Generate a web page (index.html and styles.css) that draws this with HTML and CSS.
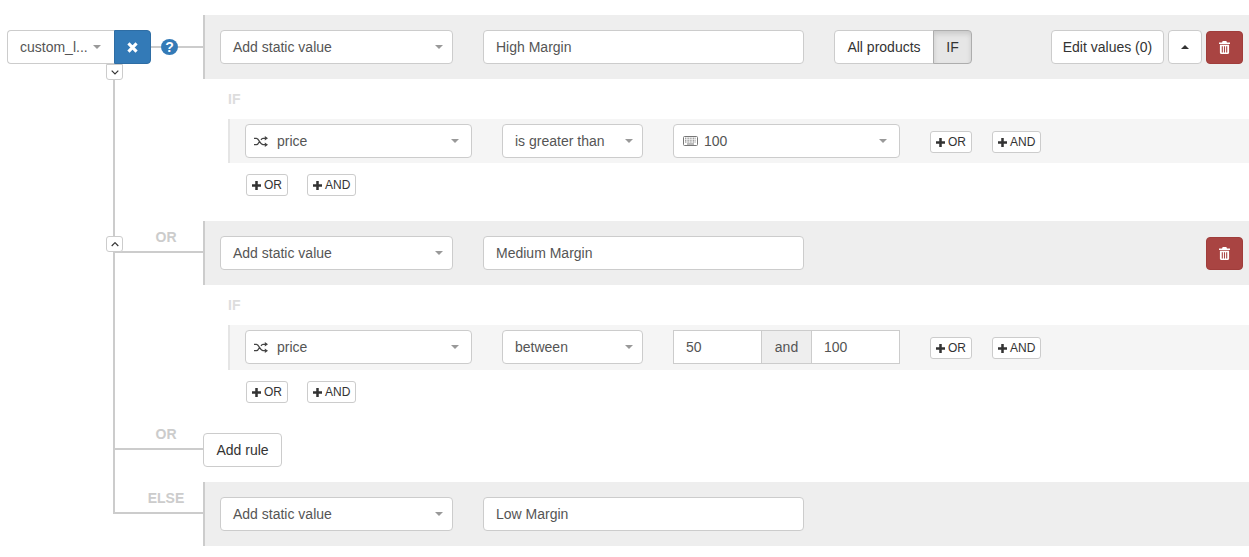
FILE: index.html
```html
<!DOCTYPE html>
<html lang="en">
<head>
<meta charset="utf-8">
<title>Rule builder</title>
<link rel="stylesheet" href="styles.css">
</head>
<body>
<svg class="defs" width="0" height="0" aria-hidden="true">
  <symbol id="plus" viewBox="0 0 10 10"><path d="M3.6 0h2.8v3.6H10v2.8H6.4V10H3.6V6.4H0V3.6h3.6z"/></symbol>
  <symbol id="trash" viewBox="0 0 12 14"><path d="M4 0h4l.7 1.5H12v1.6H0V1.500h3.300zM1 4h10v8.700c0 .8-.5 1.300-1.300 1.300H2.300C1.500 14 1 13.500 1 12.700zm2 1.500v7h1.200v-7zm2.400 0v7h1.200v-7zm2.400 0v7H9v-7z" fill-rule="evenodd"/></symbol>
  <symbol id="shuffle" viewBox="0 0 14 11"><path d="M0 2.300h2.500c2.500 0 3.500 6.400 6.500 6.400h2M0 8.700h2.500c1.400 0 2.200-1.800 2.800-3M7 3.800c.5-.8 1.100-1.500 2-1.500h2" fill="none" stroke="currentColor" stroke-width="1.300"/><path d="M10.800 0 14 2.300l-3.200 2.300zM10.800 6.400 14 8.700l-3.200 2.300z"/></symbol>
  <symbol id="keyboard" viewBox="0 0 15 10"><rect x=".5" y=".5" width="14" height="9" rx="1" fill="none" stroke="currentColor"/><path d="M2 2.200h11M2 4.200h11M2 6h11" stroke="currentColor" stroke-dasharray="1 .6" fill="none"/><path d="M4 8h7" stroke="currentColor" fill="none"/></symbol>
</svg>

<main class="builder">
  <section class="tier">
    <div class="gutter gutter-top">
      <span class="trunk trunk-first"></span>
      <div class="combo">
        <button class="select select-combo"><span class="select-text">custom_l...</span><i class="caret"></i></button>
        <button class="btn-clear"><svg width="11" height="11" viewBox="0 0 10 10"><path d="M1.300 1.300l7.400 7.400M8.700 1.300l-7.400 7.400" stroke="#fff" stroke-width="2.800" fill="none"/></svg></button>
      </div>
      <span class="stub stub-short"></span>
      <span class="help">?</span>
      <span class="stub stub-long"></span>
      <button class="toggle toggle-first"><svg width="8" height="5" viewBox="0 0 8 5"><path d="M.7.700 4 4l3.300-3.300" fill="none" stroke="#333" stroke-width="1.200"/></svg></button>
    </div>
    <div class="content content-first">
      <div class="head">
        <button class="select select-value"><span class="select-text">Add static value</span><i class="caret"></i></button>
        <input class="name" value="High Margin" readonly>
        <div class="segment">
          <button class="seg">All products</button>
          <button class="seg seg-on">IF</button>
        </div>
        <div class="head-actions">
          <button class="btn btn-edit">Edit values (0)</button>
          <button class="btn btn-up"><i class="caret caret-up"></i></button>
          <button class="btn-del"><svg class="trash-icon"><use href="#trash"/></svg></button>
        </div>
      </div>
      <div class="if-label">IF</div>
      <div class="cond">
        <button class="select select-field"><svg class="ico-shuffle"><use href="#shuffle"/></svg><span class="select-text">price</span><i class="caret"></i></button>
        <button class="select select-op"><span class="select-text">is greater than</span><i class="caret"></i></button>
        <button class="select select-field"><svg class="ico-kbd"><use href="#keyboard"/></svg><span class="select-text">100</span><i class="caret"></i></button>
        <div class="adders adders-inline">
          <button class="xs"><svg class="ico-plus"><use href="#plus"/></svg>OR</button>
          <button class="xs"><svg class="ico-plus"><use href="#plus"/></svg>AND</button>
        </div>
      </div>
      <div class="adders adders-below">
        <button class="xs"><svg class="ico-plus"><use href="#plus"/></svg>OR</button>
        <button class="xs"><svg class="ico-plus"><use href="#plus"/></svg>AND</button>
      </div>
    </div>
  </section>

  <section class="tier">
    <div class="gutter gutter-or">
      <span class="trunk"></span>
      <span class="branch branch-or"></span>
      <button class="toggle toggle-second"><svg width="8" height="5" viewBox="0 0 8 5"><path d="M.7 4 4 .7 7.300 4" fill="none" stroke="#333" stroke-width="1.200"/></svg></button>
      <div class="tag">OR</div>
    </div>
    <div class="content content-second">
      <div class="head">
        <button class="select select-value"><span class="select-text">Add static value</span><i class="caret"></i></button>
        <input class="name" value="Medium Margin" readonly>
        <div class="head-actions">
          <button class="btn-del"><svg class="trash-icon"><use href="#trash"/></svg></button>
        </div>
      </div>
      <div class="if-label">IF</div>
      <div class="cond cond-tall">
        <button class="select select-field"><svg class="ico-shuffle"><use href="#shuffle"/></svg><span class="select-text">price</span><i class="caret"></i></button>
        <button class="select select-op"><span class="select-text">between</span><i class="caret"></i></button>
        <div class="range">
          <input class="range-input range-min" value="50" readonly>
          <span class="range-and">and</span>
          <input class="range-input range-max" value="100" readonly>
        </div>
        <div class="adders adders-inline">
          <button class="xs"><svg class="ico-plus"><use href="#plus"/></svg>OR</button>
          <button class="xs"><svg class="ico-plus"><use href="#plus"/></svg>AND</button>
        </div>
      </div>
      <div class="adders adders-below">
        <button class="xs"><svg class="ico-plus"><use href="#plus"/></svg>OR</button>
        <button class="xs"><svg class="ico-plus"><use href="#plus"/></svg>AND</button>
      </div>
    </div>
  </section>

  <section class="tier">
    <div class="gutter gutter-add">
      <span class="trunk"></span>
      <span class="branch branch-add"></span>
      <div class="tag">OR</div>
    </div>
    <div class="content content-add">
      <button class="btn btn-add">Add rule</button>
    </div>
  </section>

  <section class="tier">
    <div class="gutter gutter-else">
      <span class="trunk trunk-last"></span>
      <span class="branch branch-else"></span>
      <div class="tag">ELSE</div>
    </div>
    <div class="content">
      <div class="head">
        <button class="select select-value"><span class="select-text">Add static value</span><i class="caret"></i></button>
        <input class="name" value="Low Margin" readonly>
      </div>
    </div>
  </section>
</main>
</body>
</html>
```

FILE: styles.css
```css
* { box-sizing: border-box; }

html, body {
  margin: 0;
  height: 100%;
  overflow: hidden;
  background: #fff;
}

body {
  font-family: "Liberation Sans", Arial, sans-serif;
  font-size: 14px;
  line-height: 20px;
  color: #333;
}

button, input {
  font: inherit;
  margin: 0;
}

.defs { position: absolute; }

.builder { padding-top: 15px; }

.tier { display: flex; }

.gutter {
  position: relative;
  flex: 0 0 203px;
}

.gutter-top {
  display: flex;
  align-items: center;
  align-self: stretch;
  height: 64px;
  padding-left: 7px;
}

.gutter-or { padding-top: 8px; }
.gutter-add { padding-top: 6px; }
.gutter-else { padding-top: 8px; }

.trunk {
  position: absolute;
  left: 113px;
  top: 0;
  bottom: 0;
  width: 2px;
  background: #ccc;
}

.trunk-first { top: 49px; bottom: -142px; }
.trunk-last { bottom: auto; height: 32px; }

.branch {
  position: absolute;
  left: 113px;
  width: 90px;
  height: 2px;
  background: #ccc;
}

.branch-or { top: 30px; }
.branch-add { top: 28px; }
.branch-else { top: 30px; }

.toggle {
  position: absolute;
  left: 106px;
  width: 17px;
  height: 16px;
  padding: 0;
  display: flex;
  align-items: center;
  justify-content: center;
  background: #fff;
  border: 1px solid #ccc;
  border-radius: 3px;
}

.toggle-first { top: 49px; border-top-left-radius: 0; border-top-right-radius: 0; }
.toggle-second { top: 15px; }

.tag {
  margin-left: 129px;
  width: 74px;
  height: 16px;
  line-height: 16px;
  text-align: center;
  font-weight: 700;
  color: #ccc;
}

.combo { display: flex; }

.select {
  display: flex;
  align-items: center;
  height: 34px;
  padding: 0 12px;
  background: #fff;
  border: 1px solid #ccc;
  border-radius: 4px;
  color: #555;
  text-align: left;
}

.select-text { flex: 1; white-space: nowrap; }

.caret {
  flex: none;
  width: 0;
  height: 0;
  border-left: 4px solid transparent;
  border-right: 4px solid transparent;
  border-top: 4px solid #999;
}

.select-value .caret { margin-right: -3px; }
.select-op .caret { margin-right: -3px; }
.select-combo .caret { margin-right: 1px; }

.caret-up {
  display: block;
  margin: 0;
  border-top: 0;
  border-bottom: 4px solid #333;
}

.select-combo {
  width: 107px;
  border-right: 0;
  border-radius: 4px 0 0 4px;
}

.btn-clear {
  width: 37px;
  height: 34px;
  padding: 0;
  display: flex;
  align-items: center;
  justify-content: center;
  background: #337ab7;
  border: 1px solid #2e6da4;
  border-radius: 0 4px 4px 0;
}

.stub { height: 2px; background: #ccc; margin-top: -1px; }
.stub-short { width: 10px; }
.stub-long { width: 25px; }

.help {
  flex: none;
  width: 17px;
  height: 16px;
  margin-top: -1px;
  border-radius: 50%;
  background: #337ab7;
  color: #fff;
  font-size: 14px;
  font-weight: 700;
  line-height: 16px;
  text-align: center;
}

.content { flex: 1; min-width: 0; }
.content-first { padding-bottom: 25px; }
.content-second { padding-bottom: 17px; }
.content-add { padding: 13px 0 15px; }

.head {
  display: flex;
  align-items: center;
  height: 64px;
  padding: 0 6px 0 15px;
  background: #eee;
  border-left: 2px solid #ccc;
}

.select-value { width: 233px; }

.name {
  width: 321px;
  height: 34px;
  margin-left: 30px;
  padding: 0 12px;
  background: #fff;
  border: 1px solid #ccc;
  border-radius: 4px;
  color: #555;
  outline: 0;
}

.segment { display: flex; margin-left: 30px; }

.seg {
  height: 34px;
  width: 100px;
  padding: 0;
  background: #fff;
  border: 1px solid #ccc;
  border-radius: 4px 0 0 4px;
  color: #333;
}

.seg-on {
  width: 39px;
  margin-left: -1px;
  background: #e6e6e6;
  border-color: #adadad;
  border-radius: 0 4px 4px 0;
  box-shadow: inset 0 3px 5px rgba(0, 0, 0, .125);
}

.head-actions {
  display: flex;
  align-items: center;
  gap: 4px;
  margin-left: auto;
}

.btn {
  height: 34px;
  padding: 0 12px;
  background: #fff;
  border: 1px solid #ccc;
  border-radius: 4px;
  color: #333;
}

.btn-edit { width: 113px; padding: 0; }

.btn-up {
  width: 34px;
  padding: 0;
  display: flex;
  align-items: center;
  justify-content: center;
}

.btn-del {
  width: 37px;
  height: 33px;
  padding: 0;
  display: flex;
  align-items: center;
  justify-content: center;
  background: #a94442;
  border: 1px solid #a03d3b;
  border-radius: 4px;
}

.trash-icon { width: 11px; height: 13px; fill: #fff; }

.if-label {
  height: 40px;
  margin-left: 25px;
  line-height: 40px;
  font-weight: 700;
  color: #ddd;
}

.cond {
  display: flex;
  align-items: flex-start;
  height: 44px;
  margin-left: 25px;
  padding: 5px 0 0 15px;
  background: #f5f5f5;
  border-left: 2px solid #e5e5e5;
}

.cond-tall { height: 45px; }

.select-field { width: 227px; }
.select-op { width: 141px; margin: 0 30px; }

.ico-shuffle {
  flex: none;
  width: 14px;
  height: 11px;
  margin: 0 9px 0 -4px;
  fill: #444;
  color: #444;
}

.ico-kbd {
  flex: none;
  width: 15px;
  height: 10px;
  margin: 0 6px 0 -3px;
  color: #777;
}

.range { display: flex; width: 227px; }

.range-input {
  width: 89px;
  height: 34px;
  padding: 0 12px;
  background: #fff;
  border: 1px solid #ccc;
  color: #555;
  outline: 0;
}

.range-and {
  flex: 1;
  height: 34px;
  line-height: 32px;
  text-align: center;
  background: #eee;
  border: 1px solid #ccc;
  border-width: 1px 0;
  color: #555;
}

.adders { display: flex; gap: 20px; }
.adders-inline { margin: 7px 0 0 30px; }
.adders-below { margin: 11px 0 0 43px; gap: 19px; }

.xs {
  display: flex;
  align-items: center;
  height: 22px;
  padding: 0 5px;
  background: #fff;
  border: 1px solid #ccc;
  border-radius: 3px;
  font-size: 12px;
  line-height: 18px;
  color: #333;
}

.ico-plus { width: 9px; height: 9px; margin-right: 3px; fill: #333; }

.btn-add { display: block; width: 79px; padding: 0; }
```
